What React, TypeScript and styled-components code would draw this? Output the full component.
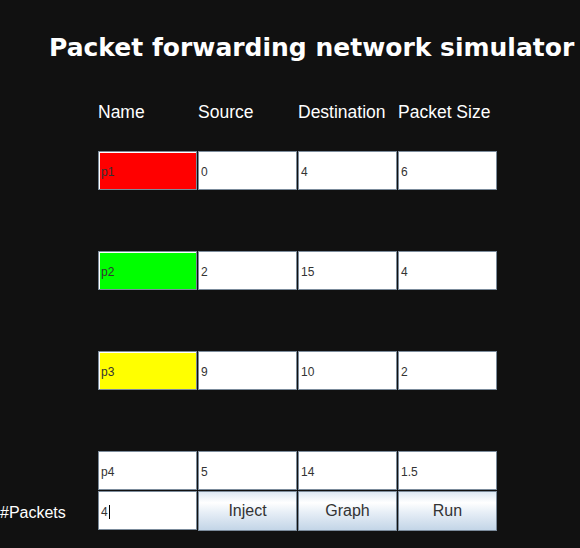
import React from "react";
import styled, { createGlobalStyle } from "styled-components";

const Global = createGlobalStyle`
  html, body { margin: 0; padding: 0; background: #111111; }
  body { font-family: "Liberation Sans", Arial, sans-serif; }
`;

const Page = styled.div`
  width: 580px;
  height: 548px;
  background: #111111;
  overflow: hidden;
  display: flex;
  flex-direction: column;
`;

const Title = styled.h1`
  margin: 32px 0 0 49px;
  font-family: "DejaVu Sans", Verdana, sans-serif;
  font-weight: bold;
  font-size: 25px;
  line-height: 32px;
  color: #ffffff;
  white-space: nowrap;
`;

const Grid = styled.div`
  display: grid;
  grid-template-columns: 97px repeat(4, 99px);
  column-gap: 1px;
  margin-top: 36px;
`;

const Header = styled.div`
  grid-column: ${(p: { col: number }) => p.col};
  font-size: 17.5px;
  line-height: 24px;
  color: #ffffff;
  white-space: nowrap;
`;

const Spacer = styled.div<{ h: number }>`
  grid-column: 1 / -1;
  height: ${(p) => p.h}px;
`;

const SideLabel = styled.div`
  grid-column: 1;
  display: flex;
  align-items: center;
  font-size: 16px;
  padding-top: 2px;
  color: #ffffff;
  height: 40px;
`;

const Field = styled.div<{ bg?: string; col: number }>`
  grid-column: ${(p) => p.col};
  box-sizing: border-box;
  height: 39px;
  margin-bottom: 1px;
  border: 1px solid #7b8b9b;
  box-shadow: inset 1px 1px 0 #ffffff;
  background: ${(p) => p.bg || "#ffffff"};
  display: flex;
  align-items: center;
  padding: 3px 0 0 2px;
  font-size: 12px;
  color: #333333;
`;

const Caret = styled.span`
  display: inline-block;
  width: 1px;
  height: 14px;
  background: #000;
  margin-left: 1px;
`;

const Button = styled.div<{ col: number }>`
  grid-column: ${(p) => p.col};
  box-sizing: border-box;
  height: 40px;
  border: 1px solid #7b8b9b;
  background: linear-gradient(
    to bottom,
    #dde8f3 0%,
    #ffffff 28%,
    #e6eef6 55%,
    #c3d5e7 100%
  );
  display: flex;
  align-items: center;
  justify-content: center;
  font-size: 16px;
  color: #333333;
`;

const rows = [
  { name: "p1", src: "0", dst: "4", size: "6", bg: "#ff0000" },
  { name: "p2", src: "2", dst: "15", size: "4", bg: "#00ff00" },
  { name: "p3", src: "9", dst: "10", size: "2", bg: "#ffff00" },
  { name: "p4", src: "5", dst: "14", size: "1.5", bg: "#ffffff" },
];

export default function App() {
  return (
    <Page>
      <Global />
      <Title>Packet forwarding network simulator</Title>
      <Grid>
        <Header col={2}>Name</Header>
        <Header col={3}>Source</Header>
        <Header col={4}>Destination</Header>
        <Header col={5}>Packet Size</Header>
        {rows.map((r, i) => (
          <React.Fragment key={r.name}>
            <Spacer h={i === 0 ? 27 : 60} />
            <Field col={2} bg={r.bg}>{r.name}</Field>
            <Field col={3}>{r.src}</Field>
            <Field col={4}>{r.dst}</Field>
            <Field col={5}>{r.size}</Field>
          </React.Fragment>
        ))}
        <SideLabel>#Packets</SideLabel>
        <Field col={2}>
          4<Caret />
        </Field>
        <Button col={3}>Inject</Button>
        <Button col={4}>Graph</Button>
        <Button col={5}>Run</Button>
      </Grid>
    </Page>
  );
}
